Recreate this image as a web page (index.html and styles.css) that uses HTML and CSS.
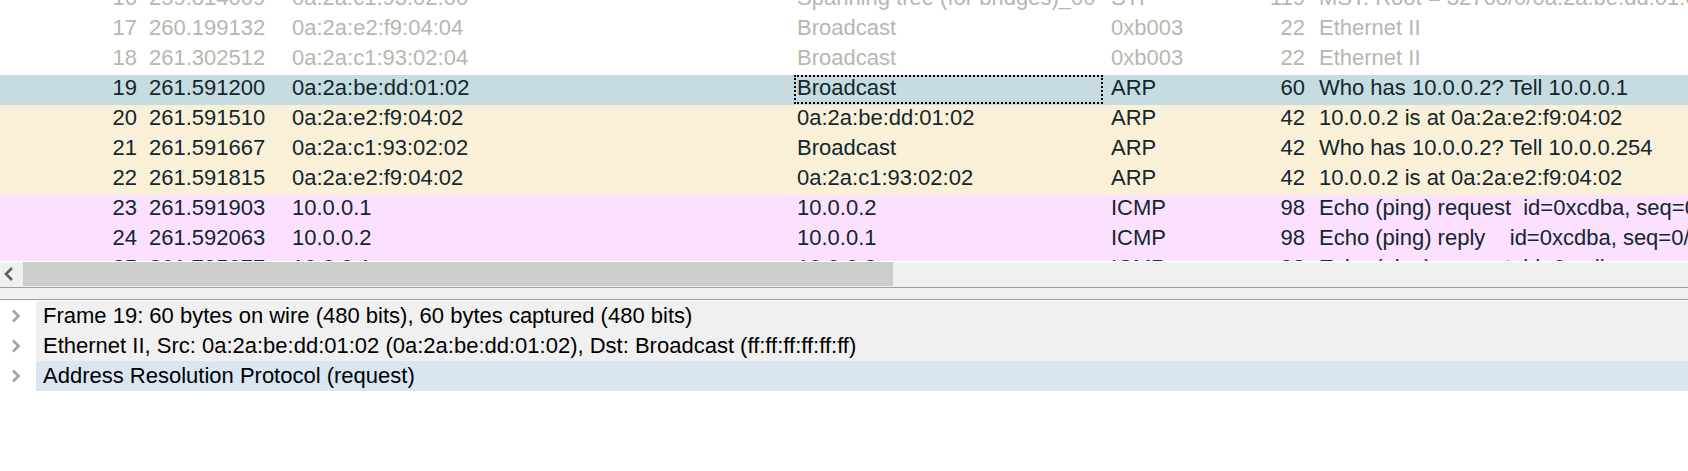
FILE: index.html
```html
<!DOCTYPE html>
<html>
<head>
<meta charset="utf-8">
<title>Packets</title>
<link rel="stylesheet" href="styles.css">
</head>
<body>
<div class="app">
  <div class="plist">
    <div class="rows">
      <div class="row dim"><span class="c no">16</span><span class="c time">259.814009</span><span class="c src">0a:2a:c1:93:02:00</span><span class="c dst">Spanning tree (for bridges)_00</span><span class="c proto">STP</span><span class="c len">119</span><span class="c info">MST. Root = 32768/0/0a:2a:be:dd:01:02  Cost = 0  Port = 0x8001</span></div>
      <div class="row dim"><span class="c no">17</span><span class="c time">260.199132</span><span class="c src">0a:2a:e2:f9:04:04</span><span class="c dst">Broadcast</span><span class="c proto">0xb003</span><span class="c len">22</span><span class="c info">Ethernet II</span></div>
      <div class="row dim"><span class="c no">18</span><span class="c time">261.302512</span><span class="c src">0a:2a:c1:93:02:04</span><span class="c dst">Broadcast</span><span class="c proto">0xb003</span><span class="c len">22</span><span class="c info">Ethernet II</span></div>
      <div class="row sel"><span class="c no">19</span><span class="c time">261.591200</span><span class="c src">0a:2a:be:dd:01:02</span><span class="c dst focus">Broadcast</span><span class="c proto">ARP</span><span class="c len">60</span><span class="c info">Who has 10.0.0.2? Tell 10.0.0.1</span></div>
      <div class="row arp"><span class="c no">20</span><span class="c time">261.591510</span><span class="c src">0a:2a:e2:f9:04:02</span><span class="c dst">0a:2a:be:dd:01:02</span><span class="c proto">ARP</span><span class="c len">42</span><span class="c info">10.0.0.2 is at 0a:2a:e2:f9:04:02</span></div>
      <div class="row arp"><span class="c no">21</span><span class="c time">261.591667</span><span class="c src">0a:2a:c1:93:02:02</span><span class="c dst">Broadcast</span><span class="c proto">ARP</span><span class="c len">42</span><span class="c info">Who has 10.0.0.2? Tell 10.0.0.254</span></div>
      <div class="row arp"><span class="c no">22</span><span class="c time">261.591815</span><span class="c src">0a:2a:e2:f9:04:02</span><span class="c dst">0a:2a:c1:93:02:02</span><span class="c proto">ARP</span><span class="c len">42</span><span class="c info">10.0.0.2 is at 0a:2a:e2:f9:04:02</span></div>
      <div class="row icmp"><span class="c no">23</span><span class="c time">261.591903</span><span class="c src">10.0.0.1</span><span class="c dst">10.0.0.2</span><span class="c proto">ICMP</span><span class="c len">98</span><span class="c info">Echo (ping) request  id=0xcdba, seq=0/0, ttl=64 (reply in 24)</span></div>
      <div class="row icmp"><span class="c no">24</span><span class="c time">261.592063</span><span class="c src">10.0.0.2</span><span class="c dst">10.0.0.1</span><span class="c proto">ICMP</span><span class="c len">98</span><span class="c info">Echo (ping) reply    id=0xcdba, seq=0/0, ttl=64 (request in 23)</span></div>
      <div class="row icmp"><span class="c no">25</span><span class="c time">261.795077</span><span class="c src">10.0.0.1</span><span class="c dst">10.0.0.2</span><span class="c proto">ICMP</span><span class="c len">98</span><span class="c info">Echo (ping) request  id=0xcdba, seq=1/256, ttl=64 (reply in 26)</span></div>
    </div>
  </div>
  <div class="hscroll">
    <div class="arrow"><svg width="12" height="16" viewBox="0 0 12 16"><polyline points="9,2 3,8 9,14" fill="none" stroke="#5f5f5f" stroke-width="2.6"/></svg></div>
    <div class="thumb"></div>
  </div>
  <div class="split"></div>
  <div class="detail">
    <div class="drow"><span class="chev"><svg width="10" height="16" viewBox="0 0 10 16"><polyline points="2,2.5 7.5,8 2,13.5" fill="none" stroke="#a3a3a3" stroke-width="2.6"/></svg></span><span class="dtext">Frame 19: 60 bytes on wire (480 bits), 60 bytes captured (480 bits)</span></div>
    <div class="drow"><span class="chev"><svg width="10" height="16" viewBox="0 0 10 16"><polyline points="2,2.5 7.5,8 2,13.5" fill="none" stroke="#a3a3a3" stroke-width="2.6"/></svg></span><span class="dtext">Ethernet II, Src: 0a:2a:be:dd:01:02 (0a:2a:be:dd:01:02), Dst: Broadcast (ff:ff:ff:ff:ff:ff)</span></div>
    <div class="drow sel"><span class="chev"><svg width="10" height="16" viewBox="0 0 10 16"><polyline points="2,2.5 7.5,8 2,13.5" fill="none" stroke="#a3a3a3" stroke-width="2.6"/></svg></span><span class="dtext">Address Resolution Protocol (request)</span></div>
  </div>
</div>
</body>
</html>
```
FILE: styles.css
```css
html, body {
  margin: 0;
  padding: 0;
  background: #ffffff;
}
body {
  width: 1688px;
  height: 471px;
  overflow: hidden;
  font-family: "Liberation Sans", Arial, sans-serif;
  font-size: 22px;
}
.plist {
  height: 261px;
  overflow: hidden;
}
.rows {
  margin-top: -15px;
}
.row {
  display: grid;
  grid-template-columns: 142px 146px 506px 309px 100px 106px 1fr;
  height: 30px;
  line-height: 26px;
  color: #12272e;
  white-space: pre;
}
.row .c {
  overflow: hidden;
  box-sizing: border-box;
}
.row.dim { color: #b9b6af; background: #ffffff; }
.row.sel { background: #c7dce0; }
.row.arp { background: #faf0d7; }
.row.icmp { background: #fce0ff; }
.no { text-align: right; padding-right: 5px; }
.time { padding-left: 7px; }
.src { padding-left: 4px; }
.dst { padding-left: 3px; }
.proto { padding-left: 8px; }
.len { text-align: right; padding-right: 4px; }
.info { padding-left: 10px; }
.focus {
  position: relative;
}
.focus::after {
  content: "";
  position: absolute;
  left: 0;
  top: 0;
  right: 0;
  bottom: 1px;
  border: 2px dotted #000000;
}
.hscroll {
  display: flex;
  height: 25px;
  border-top: 1px solid #ffffff;
  background: #f0f0f0;
}
.arrow {
  width: 23px;
  height: 24px;
  display: flex;
  align-items: center;
  padding-left: 3px;
  box-sizing: border-box;
}
.thumb {
  width: 870px;
  height: 24px;
  background: #cdcdcd;
}
.split {
  height: 11px;
  border-top: 1px solid #a0a0a0;
  border-bottom: 1px solid #a0a0a0;
  background: #f0f0f0;
}
.detail {
  padding-top: 1px;
}
.drow {
  display: flex;
  height: 30px;
  line-height: 30px;
}
.chev {
  width: 36px;
  display: flex;
  align-items: center;
  padding-left: 11px;
  box-sizing: border-box;
}
.dtext {
  flex: 1;
  background: #f0f0f0;
  padding-left: 7px;
  color: #000000;
  white-space: pre;
}
.drow.sel .dtext {
  background: #d9e6f1;
}
```
